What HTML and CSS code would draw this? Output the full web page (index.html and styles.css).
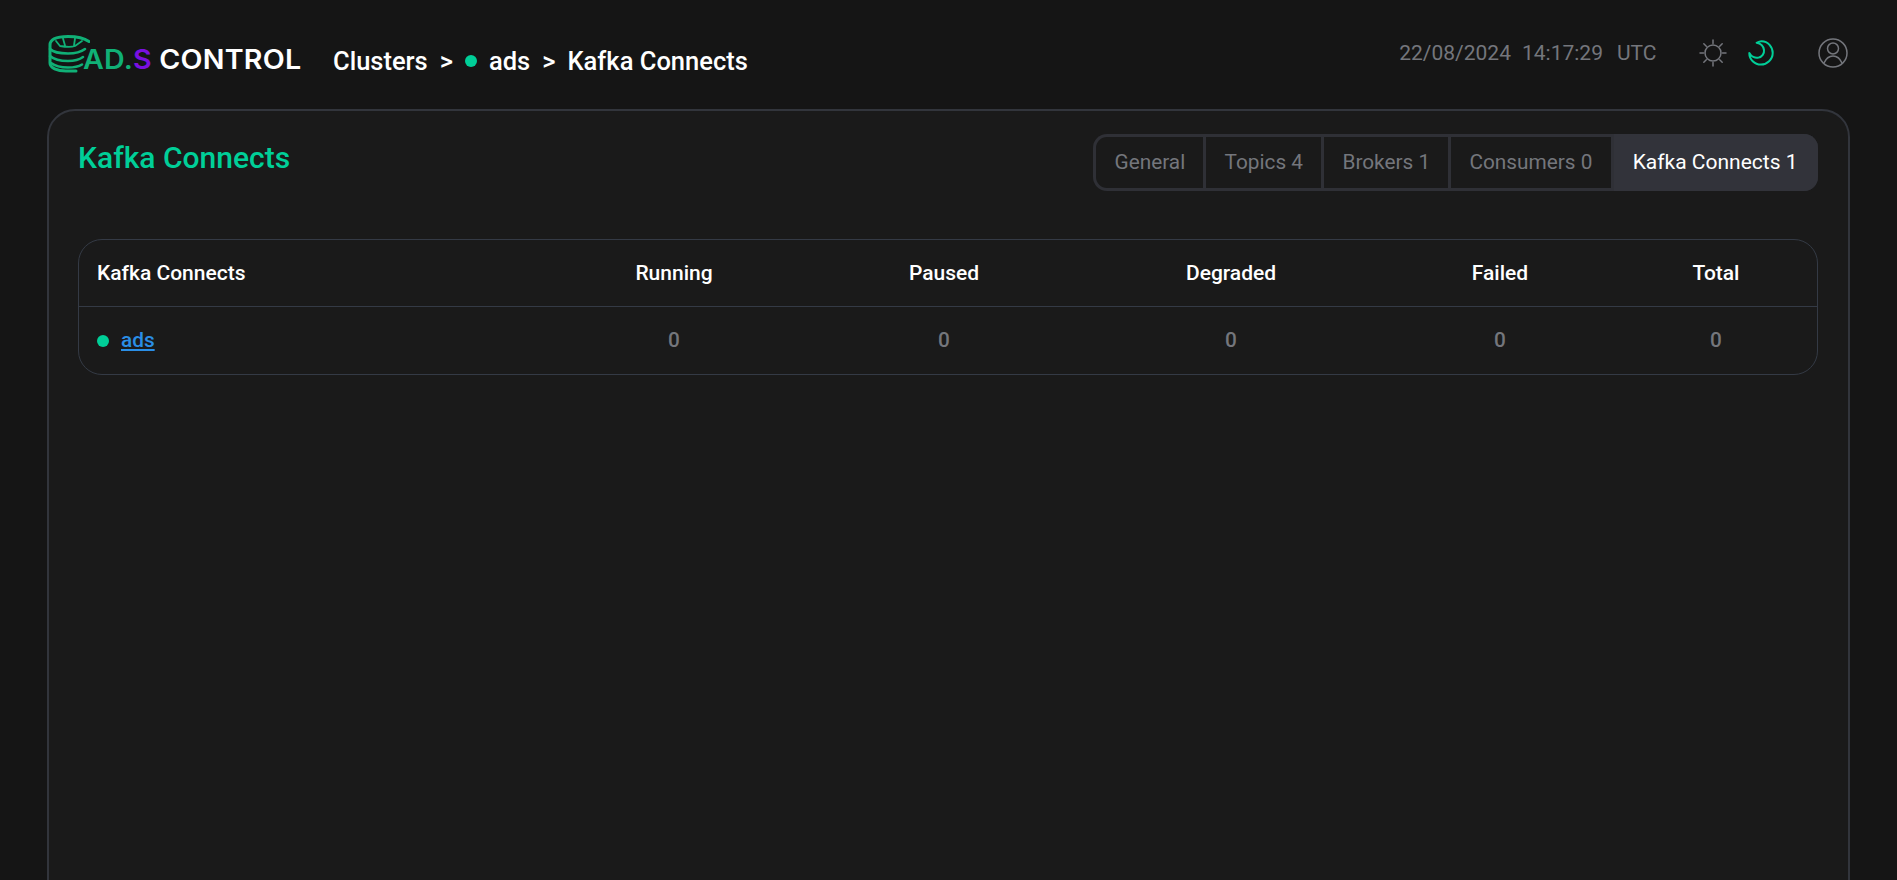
FILE: index.html
```html
<!DOCTYPE html>
<html lang="en">
<head>
<meta charset="utf-8">
<title>Kafka Connects</title>
<link rel="stylesheet" href="styles.css">
</head>
<body>
<header class="topbar">
  <div class="brand">
    <svg class="brand-mark" viewBox="0 0 42 38" width="42" height="38" fill="none" stroke="#10b076" stroke-width="2.600" stroke-linecap="round" stroke-linejoin="round">
      <path d="M41 6.500C36 3 28 1.500 20 1.500C10 1.500 2 4 2 10V28C2 33 9 36 18 36H28" stroke-width="3"/>
      <path d="M2 14C5 17 12 18.500 20 18.500C27 18.500 33 17 37 14"/>
      <path d="M2 21C6 24.500 13 26 20 26C26 26 31 25 35 22"/>
      <path d="M3 28C7 31 13 32.500 20 32.500C25 32.500 30 32 34 29.500"/>
      <path d="M8 6L12 11C18 12 24 12 27 11L34 6M15 3.500L17 10.500M27 3.500L26 10.500" stroke-width="1.800"/>
    </svg>
    <span class="brand-name"><span class="brand-ad">AD.</span><span class="brand-s">S</span> <span class="brand-control">CONTROL</span></span>
  </div>
  <nav class="crumbs">
    <span>Clusters</span>
    <span class="sep">&gt;</span>
    <i class="dot"></i>
    <span>ads</span>
    <span class="sep">&gt;</span>
    <span>Kafka Connects</span>
  </nav>
  <div class="tools">
    <div class="clock"><span>22/08/2024</span><span>14:17:29</span><span class="utc">UTC</span></div>
    <svg class="sun" width="28" height="28" viewBox="0 0 28 28" fill="none" stroke="#74767c" stroke-width="1.500" stroke-linecap="round">
      <circle cx="14" cy="14" r="8"/>
      <path d="M14 1V4.500M14 23.500V27M1 14H4.500M23.500 14H27M4.800 4.800L7.300 7.300M20.700 20.700L23.200 23.200M4.800 23.200L7.300 20.700M20.700 7.300L23.200 4.800"/>
    </svg>
    <svg class="moon" width="26" height="26" viewBox="0 0 26 26" fill="none" stroke="#00cf98" stroke-width="2" stroke-linejoin="round">
      <path d="M8.600 2.800C10.500 1.800 12 1.300 13.600 1.300C20 1.300 24.700 6.800 24.700 13C24.700 19.500 19 24.600 13 24.600C6.500 24.600 1.300 19.500 1.300 13C3 16.500 7 18.400 10.500 17.600C14 16.800 16.500 13.500 16 10C15.500 6.500 12.500 3.500 8.600 2.800Z"/>
    </svg>
    <svg class="user" width="30" height="30" viewBox="0 0 30 30" fill="none" stroke="#74767c" stroke-width="1.500">
      <circle cx="15" cy="15" r="14"/>
      <circle cx="15" cy="10.500" r="5.500"/>
      <path d="M6 25C8 20.500 11 18 15 18C19 18 22 20.500 24 25"/>
    </svg>
  </div>
</header>
<main class="card">
  <div class="card-head">
    <h1 class="title">Kafka Connects</h1>
    <div class="tabs">
      <a class="tab">General</a>
      <a class="tab">Topics 4</a>
      <a class="tab">Brokers 1</a>
      <a class="tab">Consumers 0</a>
      <a class="tab tab-active">Kafka Connects 1</a>
    </div>
  </div>
  <div class="table-wrap">
    <table class="grid">
      <colgroup>
        <col class="c-name"><col class="c-running"><col class="c-paused"><col class="c-degraded"><col class="c-failed"><col class="c-total">
      </colgroup>
      <thead>
        <tr><th class="name">Kafka Connects</th><th>Running</th><th>Paused</th><th>Degraded</th><th>Failed</th><th>Total</th></tr>
      </thead>
      <tbody>
        <tr>
          <td class="name"><i class="dot dot-row"></i><a class="link">ads</a></td>
          <td>0</td><td>0</td><td>0</td><td>0</td><td>0</td>
        </tr>
      </tbody>
    </table>
  </div>
</main>
</body>
</html>
```
FILE: styles.css
```css
* { box-sizing: border-box; }
html, body { height: 100%; }
body {
  margin: 0;
  height: 880px;
  overflow: hidden;
  background: #151515;
  color: #fff;
  font-family: Roboto, "Liberation Sans", sans-serif;
  padding: 0 47px;
}
.topbar {
  height: 109px;
  display: flex;
  align-items: flex-start;
}
.brand {
  display: flex;
  align-items: flex-end;
  margin-top: 35px;
  width: 286px;
  flex: none;
}
.brand-mark { flex: none; margin-left: 1px; }
.brand-name {
  font-family: Inter, sans-serif;
  font-size: 26.500px;
  font-weight: 600;
  letter-spacing: 0.200px;
  line-height: 30px;
  margin-left: -7px;
  margin-bottom: -1px;
  white-space: pre;
  transform: scaleX(1.08);
  transform-origin: left center;
}
.brand-ad { color: #10b076; }
.brand-s { color: #7a10e0; }
.crumbs {
  display: flex;
  align-items: center;
  gap: 12px;
  margin-top: 46px;
  font-size: 25.500px;
  font-weight: 500;
  line-height: 30px;
}
.dot {
  display: block;
  width: 12px;
  height: 12px;
  border-radius: 50%;
  background: #00cf98;
  flex: none;
}
.tools {
  margin-left: auto;
  margin-top: 39px;
  display: flex;
  align-items: center;
  height: 28px;
}
.clock {
  display: flex;
  gap: 11px;
  font-size: 21px;
  color: #74767c;
  margin-right: 42px;
}
.utc { margin-left: 3px; }
.moon { margin-left: 21px; }
.user { margin-left: 44.500px; margin-right: 2px; }
.card {
  height: 900px;
  background: #1a1a1a;
  border: 2px solid #32353c;
  border-radius: 28px;
  padding: 23px 30px 23px 29px;
}
.card-head {
  display: flex;
  justify-content: space-between;
  align-items: flex-start;
  height: 105px;
}
.title {
  margin: 0;
  font-size: 30px;
  line-height: 48px;
  font-weight: 500;
  color: #00cf98;
}
.tabs {
  display: flex;
  height: 57px;
  border-radius: 14px;
  background: #2f3036;
  padding: 3px;
  overflow: hidden;
}
.tab {
  display: flex;
  align-items: center;
  padding: 0 18.200px 2px;
  background: #1a1a1a;
  color: #74767c;
  font-size: 20.800px;
  margin-right: 3px;
}
.tab:first-child { border-radius: 11px 0 0 11px; }
.tab-active {
  background: #32333a;
  color: #fff;
  margin: -3px -3px -3px 0;
  padding: 0 20.500px 2px 19px;
  font-size: 21px;
}
.table-wrap {
  border: 1px solid #343a45;
  border-radius: 24px;
  overflow: hidden;
}
.grid {
  width: 100%;
  border-collapse: collapse;
  table-layout: fixed;
}
.c-name { width: 458px; }
.c-running { width: 274px; }
.c-paused { width: 266px; }
.c-degraded { width: 308px; }
.c-failed { width: 230px; }
.c-total { width: 202px; }
th, td {
  text-align: center;
  padding: 0;
}
th {
  height: 66px;
  font-size: 21px;
  font-weight: 500;
  border-bottom: 1px solid #343a45;
}
td {
  height: 68px;
  font-size: 20.800px;
  font-weight: 500;
  color: #74767c;
}
th.name, td.name { text-align: left; padding-left: 18px; }
.dot-row { display: inline-block; margin-right: 12px; }
.link {
  color: #2a8ee6;
  text-decoration: underline;
}
```
